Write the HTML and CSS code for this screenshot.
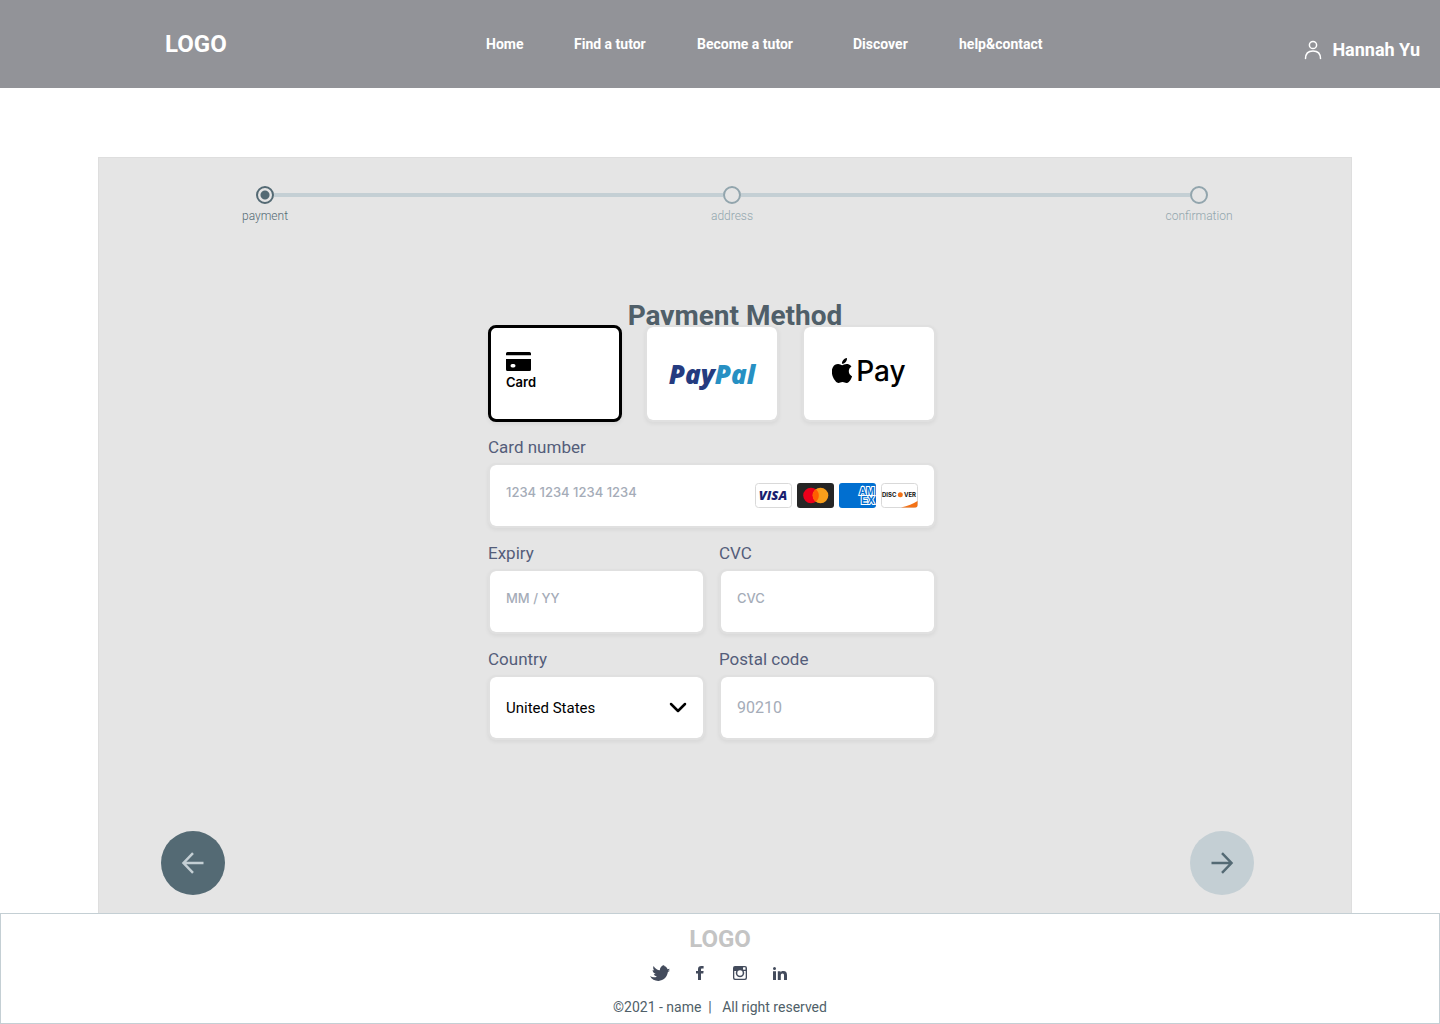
FILE: index.html
```html
<!DOCTYPE html>
<html lang="en">
<head>
<meta charset="utf-8">
<meta name="viewport" content="width=device-width, initial-scale=1">
<title>Payment Method</title>
<link rel="stylesheet" href="styles.css">
</head>
<body>
<header class="site-header">
  <a class="logo" href="#">LOGO</a>
  <nav class="site-nav" aria-label="Main">
    <a href="#">Home</a>
    <a href="#">Find a tutor</a>
    <a href="#">Become a tutor</a>
    <a href="#">Discover</a>
    <a href="#">help&amp;contact</a>
  </nav>
  <a class="user" href="#">
    <svg class="user-icon" width="18" height="20" viewBox="0 0 18 20" aria-hidden="true">
      <circle cx="9" cy="5" r="3.6"/>
      <path d="M1.5 18.6C1.5 13.6 4.5 10.9 9 10.9s7.500 2.700 7.500 7.700"/>
    </svg>
    Hannah Yu
  </a>
</header>

<main class="panel">
  <ol class="stepper">
    <li class="step step-current" aria-current="step"><span class="dot"></span>payment</li>
    <li class="track" aria-hidden="true"></li>
    <li class="step"><span class="dot"></span>address</li>
    <li class="track" aria-hidden="true"></li>
    <li class="step"><span class="dot"></span>confirmation</li>
  </ol>

  <h1 class="title">Payment Method</h1>

  <form class="payment" id="payment">
    <div class="methods" role="radiogroup" aria-label="Payment method">
      <label class="method method-card">
        <input type="radio" name="method" value="card" checked>
        <svg width="25" height="19" viewBox="0 0 25 19" aria-hidden="true">
          <path d="M1.5 0h22A1.5 1.5 0 0 1 25 1.500V3.200H0V1.500A1.500 1.500 0 0 1 1.500 0z"/>
          <path fill-rule="evenodd" d="M0 7h25v10.500a1.500 1.500 0 0 1-1.500 1.500h-22A1.500 1.500 0 0 1 0 17.500zM6.200 12a1.700 1.700 0 0 0 0 3.400h1.600a1.700 1.700 0 0 0 0-3.400z"/>
        </svg>
        <span>Card</span>
      </label>
      <label class="method">
        <input type="radio" name="method" value="paypal">
        <span class="paypal"><span class="paypal-first">Pay</span><span class="paypal-second">Pal</span></span>
      </label>
      <label class="method">
        <input type="radio" name="method" value="apple-pay">
        <span class="apple-pay">
          <svg width="20" height="25" viewBox="2.500 0 19 24" aria-hidden="true">
            <path d="M12.152 6.896c-.948 0-2.415-1.078-3.960-1.040-2.040.027-3.910 1.183-4.961 3.014-2.117 3.675-.546 9.103 1.519 12.090 1.013 1.454 2.208 3.090 3.792 3.039 1.520-.065 2.090-.987 3.935-.987 1.831 0 2.350.987 3.960.948 1.637-.026 2.676-1.480 3.676-2.948 1.156-1.688 1.636-3.325 1.662-3.415-.039-.013-3.182-1.221-3.220-4.857-.026-3.040 2.480-4.494 2.597-4.559-1.429-2.090-3.623-2.324-4.390-2.376-2-.156-3.675 1.090-4.610 1.090zM15.530 3.830c.843-1.012 1.400-2.427 1.245-3.830-1.207.052-2.662.805-3.532 1.818-.780.896-1.454 2.338-1.273 3.714 1.338.104 2.715-.688 3.559-1.701"/>
          </svg>
          Pay
        </span>
      </label>
    </div>

    <div class="fields">
      <div class="field field-wide">
        <label for="number">Card number</label>
        <div class="box">
          <input class="raised" id="number" type="text" inputmode="numeric" placeholder="1234 1234 1234 1234">
          <ul class="brands">
            <li>
              <svg width="37" height="25" viewBox="0 0 37 25" role="img" aria-label="Visa">
                <rect class="badge-frame" x="0.500" y="0.500" width="36" height="24" rx="3"/>
                <text class="visa" x="18" y="17" text-anchor="middle">VISA</text>
              </svg>
            </li>
            <li>
              <svg width="37" height="25" viewBox="0 0 37 25" role="img" aria-label="Mastercard">
                <rect width="37" height="25" rx="3" fill="#252525"/>
                <circle cx="14" cy="12.500" r="7.800" fill="#eb001b"/>
                <circle cx="23.500" cy="12.500" r="7.800" fill="#f79e1b"/>
                <path d="M18.750 6.300a7.800 7.800 0 0 1 0 12.400a7.800 7.800 0 0 1 0-12.400z" fill="#ff5f00"/>
              </svg>
            </li>
            <li>
              <svg width="37" height="25" viewBox="0 0 37 25" role="img" aria-label="American Express">
                <rect width="37" height="25" rx="3" fill="#016fd0"/>
                <text class="amex" x="20" y="12">AM</text>
                <text class="amex" x="22" y="21">EX</text>
              </svg>
            </li>
            <li>
              <svg width="37" height="25" viewBox="0 0 37 25" role="img" aria-label="Discover">
                <rect class="badge-frame" x="0.500" y="0.500" width="36" height="24" rx="3"/>
                <path d="M20 24.500C27 23 32 21 36.500 18v4a2.500 2.500 0 0 1-2.500 2.500z" fill="#f47216"/>
                <text class="discover" x="1" y="14">DISC</text>
                <circle cx="19.300" cy="11.800" r="2.500" fill="#f47216"/>
                <text class="discover" x="23" y="14">VER</text>
              </svg>
            </li>
          </ul>
        </div>
      </div>

      <div class="field">
        <label for="expiry">Expiry</label>
        <div class="box"><input class="raised" id="expiry" type="text" placeholder="MM / YY"></div>
      </div>
      <div class="field">
        <label for="cvc">CVC</label>
        <div class="box"><input class="raised" id="cvc" type="text" placeholder="CVC"></div>
      </div>
      <div class="field">
        <label for="country">Country</label>
        <div class="box">
          <select id="country"><option>United States</option></select>
          <svg class="chevron" width="18" height="12" viewBox="0 0 18 12" aria-hidden="true"><path d="M2 2l7 7 7-7"/></svg>
        </div>
      </div>
      <div class="field">
        <label for="postal">Postal code</label>
        <div class="box"><input class="postal" id="postal" type="text" placeholder="90210"></div>
      </div>
    </div>
  </form>

  <div class="pager">
    <button class="round round-back" type="button" aria-label="Back">
      <svg width="24" height="24" viewBox="0 0 24 24" aria-hidden="true"><path d="M22.500 12H3M12 2.200L2.500 12l9.500 9.800"/></svg>
    </button>
    <button class="round round-next" type="submit" form="payment" aria-label="Next">
      <svg width="24" height="24" viewBox="0 0 24 24" aria-hidden="true"><path d="M1.500 12H21M12 2.200L21.500 12 12 21.800"/></svg>
    </button>
  </div>
</main>

<footer class="site-footer">
  <a class="logo logo-muted" href="#">LOGO</a>
  <ul class="social">
    <li><a href="#" aria-label="Twitter">
      <svg width="20" height="16" viewBox="0 0 20 16"><path d="M20 5.800l-1.900-.4c.8-.3 1.400-.8 1.600-1.600l-2.100.4C16.900 2.200 15.600 1 13.900.9l.7-.9c-3 .4-4.600 2.500-4.800 5.300C7.400 4.900 5 3.400 3.600.9 2.800 2.600 3.200 4.300 4.300 5.500L2.600 5.100c0 2 1.300 3.200 3.100 3.900l-2 .3c.6 1.200 1.700 1.900 3.200 2.100-1.600 1.200-4.300 1.400-6.900-.3C1.700 14.700 5 16 8.600 15.900c5-.1 8.500-3.600 9.300-8.800z"/></svg>
    </a></li>
    <li><a href="#" aria-label="Facebook">
      <svg width="8" height="14" viewBox="0 0 8 14"><path d="M7.600 0v2.600H6C5.300 2.600 5 3 5 3.600v1.300h2.600l-.3 2.500H5V14H2V7.400H0V4.900h2V3.200C2 1.200 3.200 0 5.200 0z"/></svg>
    </a></li>
    <li><a href="#" aria-label="Instagram">
      <svg width="14" height="14" viewBox="0 0 14 14"><path fill-rule="evenodd" d="M2 0h10a2 2 0 0 1 2 2v10a2 2 0 0 1-2 2H2a2 2 0 0 1-2-2V2a2 2 0 0 1 2-2zM1.300 5v6.500a1.200 1.200 0 0 0 1.200 1.200h9a1.200 1.200 0 0 0 1.200-1.200V5h-2a4.200 4.200 0 1 1-7.400 0zM10.500 1.200a.5.500 0 0 0-.5.500v1.500c0 .3.200.5.500.5H12a.5.500 0 0 0 .5-.5V1.700a.5.500 0 0 0-.5-.5zM7 4.300a2.700 2.700 0 1 0 0 5.400 2.700 2.700 0 0 0 0-5.400z"/></svg>
    </a></li>
    <li><a href="#" aria-label="LinkedIn">
      <svg width="14" height="13" viewBox="0 0 14 13"><path d="M0 4.200h3V13H0zM1.500 0a1.500 1.500 0 1 1 0 3 1.500 1.500 0 0 1 0-3zM4.800 4.200h2.800v1.200c.5-.9 1.400-1.400 2.700-1.400C13 4 14 5.600 14 8.100V13h-3V8.600c0-1.200-.3-2.100-1.500-2.100S7.800 7.400 7.800 8.500V13h-3z"/></svg>
    </a></li>
  </ul>
  <p class="legal">©2021 - name&nbsp; |&nbsp;&nbsp; All right reserved</p>
</footer>
</body>
</html>
```
FILE: styles.css
```css
* {
  box-sizing: border-box;
}

body {
  margin: 0;
  min-height: 100vh;
  display: flex;
  flex-direction: column;
  background: #fff;
  color: #000;
  font-family: Roboto, "Liberation Sans", sans-serif;
}

a {
  color: inherit;
  text-decoration: none;
}

ul,
ol {
  margin: 0;
  padding: 0;
  list-style: none;
}

svg {
  display: block;
}

/* Header */
.site-header {
  display: grid;
  grid-template-columns: 321px 1fr auto;
  align-items: center;
  min-height: 88px;
  padding: 0 20px 0 165px;
  background: #929398;
  color: #fff;
}

.logo {
  font-size: 24px;
  line-height: 28px;
  font-weight: 700;
}

.site-nav {
  display: grid;
  grid-template-columns: 88px 123px 156px 106px auto;
  justify-content: start;
  font-size: 14px;
  line-height: 20px;
  font-weight: 700;
}

.user {
  display: flex;
  align-items: center;
  gap: 10px;
  padding-top: 12px;
  font-size: 18px;
  line-height: 20px;
  font-weight: 700;
}

.user-icon {
  fill: none;
  stroke: #fff;
  stroke-width: 1.5;
  stroke-linecap: round;
}

/* Panel */
.panel {
  flex: 1;
  display: flex;
  flex-direction: column;
  margin: 69px 88px 0 98px;
  border: 1px solid #dedede;
  border-bottom: 0;
  background: #e5e5e5;
}

.stepper {
  display: flex;
  margin: 28px 118px 0 132px;
}

.step {
  flex: 0 0 68px;
  display: flex;
  flex-direction: column;
  align-items: center;
  gap: 4px;
  color: #92a5ad;
  font-size: 12px;
  line-height: 16px;
  font-weight: 300;
}

.dot {
  width: 18px;
  height: 18px;
  border: 2px solid #92a5ad;
  border-radius: 50%;
}

.step-current {
  color: #546a74;
}

.step-current .dot {
  border-color: #546a74;
  background: radial-gradient(circle, #546a74 4px, transparent 5px);
}

.track {
  flex: 1;
  height: 4px;
  margin: 7px -25px 0;
  background: #c4cfd4;
}

.title {
  margin: 76px 0 0;
  padding-left: 20px;
  color: #505f69;
  font-size: 28px;
  line-height: 32px;
  font-weight: 700;
  text-align: center;
}

/* Payment form, whose cards sit on the lower edge of the title */
.payment {
  position: relative;
  width: 100%;
  max-width: 474px;
  margin: -7px auto 24px;
  padding-right: 26px;
}

.methods {
  display: grid;
  grid-template-columns: repeat(3, minmax(0, 1fr));
  gap: 23px;
}

.method,
.box {
  border: 2px solid #e0e0e0;
  border-radius: 8px;
  background: #fff;
  background-clip: padding-box;
  box-shadow: 0 2px 4px rgba(0, 0, 0, 0.06);
}

.method {
  display: flex;
  flex-direction: column;
  align-items: center;
  justify-content: center;
  height: 97px;
}

.method:has(input:checked) {
  border: 3px solid #000;
}

.method input {
  position: absolute;
  opacity: 0;
  pointer-events: none;
}

.method-card {
  align-items: flex-start;
  gap: 3px;
  padding: 0 0 6px 15px;
  font-family: Inter, "Liberation Sans", sans-serif;
  font-size: 13px;
  line-height: 16px;
  font-weight: 600;
}

.paypal {
  font-family: "Open Sans", Lato, sans-serif;
  font-size: 26px;
  line-height: 32px;
  font-style: italic;
  font-weight: 800;
}

.paypal-first {
  color: #253b80;
}

.paypal-second {
  color: #2790c3;
}

.apple-pay {
  display: flex;
  align-items: center;
  gap: 4px;
  padding-bottom: 6px;
  font-family: Inter, "Liberation Sans", sans-serif;
  font-size: 28px;
  line-height: 32px;
  font-weight: 500;
}

.fields {
  display: grid;
  grid-template-columns: repeat(2, minmax(0, 1fr));
  column-gap: 14px;
}

.field {
  display: flex;
  flex-direction: column;
  gap: 6px;
  padding-top: 15px;
}

.field-wide {
  grid-column: 1 / -1;
}

.field label {
  color: #545d7a;
  font-size: 17px;
  line-height: 20px;
}

.box {
  display: flex;
  align-items: center;
  height: 65px;
  padding: 0 16px;
}

.box input,
.box select {
  flex: 1;
  min-width: 0;
  height: 100%;
  margin: 0;
  padding: 0;
  border: 0;
  outline: 0;
  background: none;
  color: #000;
}

.box .raised {
  padding-bottom: 7px;
  font-family: Inter, "Liberation Sans", sans-serif;
  font-size: 13px;
  font-weight: 500;
}

.box .postal {
  font-family: Roboto, "Liberation Sans", sans-serif;
  font-size: 16px;
}

.box input::placeholder {
  color: #a5acb8;
  opacity: 1;
}

.box select {
  appearance: none;
  font-family: Roboto, "Liberation Sans", sans-serif;
  font-size: 15px;
}

.chevron {
  margin-left: -18px;
  fill: none;
  stroke: #000;
  stroke-width: 2.5;
  stroke-linecap: round;
  stroke-linejoin: round;
  pointer-events: none;
}

.brands {
  display: flex;
  gap: 5px;
}

.badge-frame {
  fill: #fff;
  stroke: #d9d9d9;
}

.visa {
  fill: #1a1f71;
  font: italic 800 13px "Open Sans", sans-serif;
}

.amex {
  fill: #016fd0;
  stroke: #fff;
  stroke-width: 2;
  paint-order: stroke;
  font: 700 10px "Liberation Sans", sans-serif;
}

.discover {
  fill: #111;
  font: 700 6px Inter, sans-serif;
}

/* Back and next */
.pager {
  display: flex;
  justify-content: space-between;
  margin-top: auto;
  padding: 0 97px 18px 62px;
}

.round {
  display: grid;
  place-items: center;
  width: 64px;
  height: 64px;
  padding: 0;
  border: 0;
  border-radius: 50%;
  cursor: pointer;
}

.round svg {
  fill: none;
  stroke: currentColor;
  stroke-width: 2.5;
}

.round-back {
  background: #546a74;
  color: #c4cfd4;
}

.round-next {
  background: #c4cfd4;
  color: #546a74;
}

/* Footer */
.site-footer {
  display: flex;
  flex-direction: column;
  align-items: center;
  min-height: 111px;
  padding: 11px 0 6px;
  border: 1px solid #c4cfd4;
  background: #fff;
}

.logo-muted {
  color: #c4c4c4;
}

.social {
  display: grid;
  grid-template-columns: repeat(4, 40px);
  margin-top: 11px;
}

.social a {
  display: grid;
  place-items: center;
  height: 18px;
}

.social svg {
  fill: #434b5c;
}

.legal {
  margin: 15px 0 0;
  color: #505f69;
  font-size: 14px;
  line-height: 20px;
}
```
